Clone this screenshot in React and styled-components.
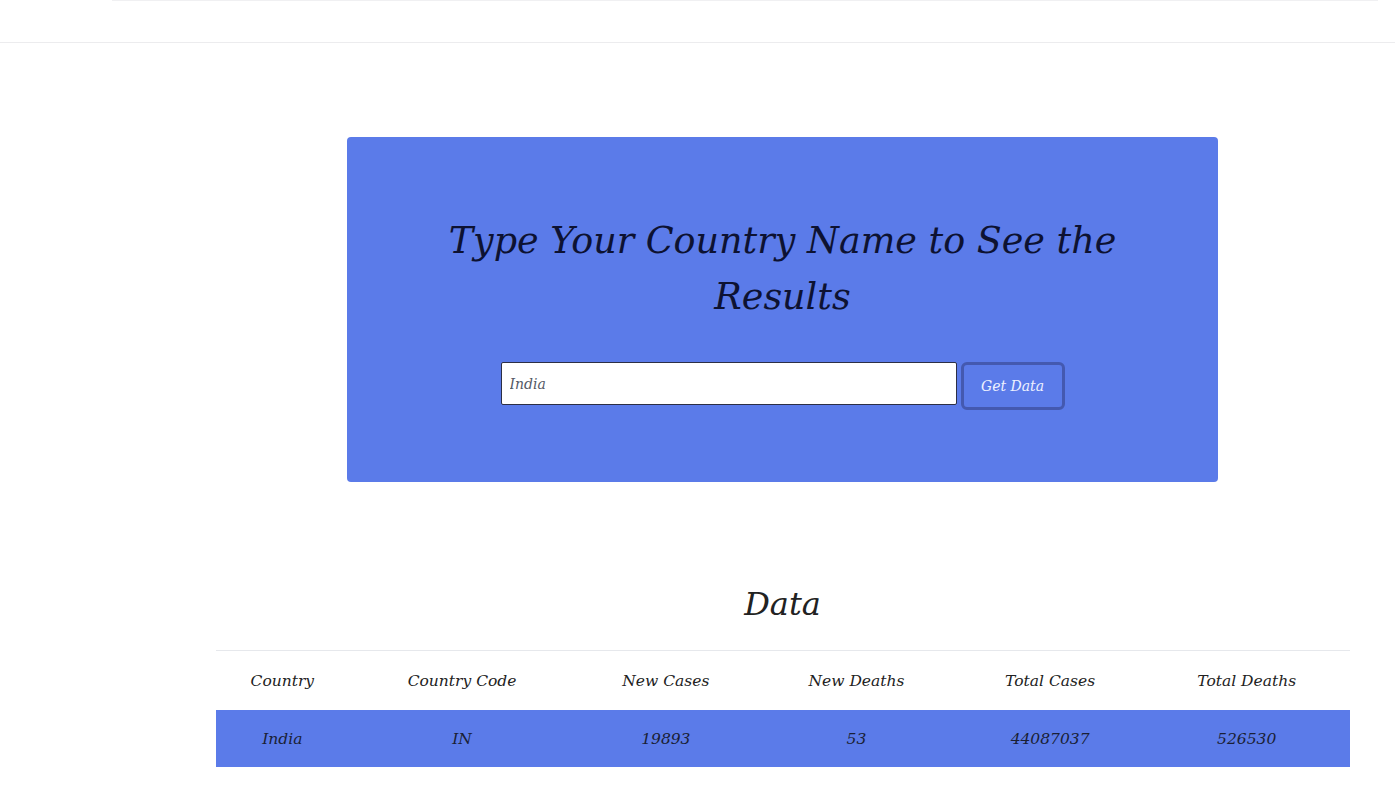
import React from "react";
import styled, { createGlobalStyle } from "styled-components";

const GlobalStyle = createGlobalStyle`
  html, body {
    margin: 0;
    padding: 0;
    background: #ffffff;
  }
  body {
    font-family: "DejaVu Serif", "Liberation Serif", serif;
    font-style: italic;
    color: #1a1f36;
  }
`;

const Nav = styled.div`
  height: 42px;
  border-bottom: 1px solid #ececee;
  display: flex;
  justify-content: center;
`;

const NavLine = styled.div`
  width: 1266px;
  margin-left: 95px;
  height: 1px;
  background: #f0f0f2;
`;

const Main = styled.div`
  padding-left: 170px;
  display: flex;
  flex-direction: column;
  align-items: center;
`;

const SearchCard = styled.div`
  margin-top: 94px;
  width: 871px;
  height: 345px;
  box-sizing: border-box;
  background: #5b7be9;
  border-radius: 4px;
  padding-top: 76px;
  display: flex;
  flex-direction: column;
  align-items: center;
`;

const Title = styled.h1`
  margin: 0;
  width: 700px;
  text-align: center;
  font-weight: 400;
  font-size: 36.5px;
  line-height: 56px;
  color: #0d1232;
`;

const Form = styled.div`
  margin-top: 37px;
  display: flex;
  align-items: flex-start;
  gap: 4px;
`;

const Input = styled.input`
  width: 456px;
  height: 43px;
  box-sizing: border-box;
  border: 1px solid #2c2f45;
  border-radius: 2px;
  padding: 0 8px;
  font-family: inherit;
  font-style: italic;
  font-size: 14px;
  color: #555a66;
  background: #ffffff;
  outline: none;
`;

const Button = styled.button`
  width: 104px;
  height: 48px;
  box-sizing: border-box;
  border: 3px solid #4459b0;
  border-radius: 6px;
  background: #5b7be9;
  color: #eef1ff;
  font-family: inherit;
  font-style: italic;
  font-size: 14px;
`;

const DataTitle = styled.h2`
  margin: 102px 0 0;
  font-weight: 400;
  font-size: 32px;
  line-height: 40px;
  color: #222;
`;

const Table = styled.table`
  margin-top: 26px;
  width: 1134px;
  border-collapse: collapse;
  border-top: 1px solid #e6e8ec;
  font-size: 15.5px;
`;

const Th = styled.th`
  height: 57px;
  font-weight: 400;
  color: #222;
  text-align: center;
`;

const Row = styled.tr`
  background: #5b7be9;
`;

const Td = styled.td`
  height: 55px;
  text-align: center;
  color: #1a1f36;
`;

const columns = ["Country", "Country Code", "New Cases", "New Deaths", "Total Cases", "Total Deaths"];
const values = ["India", "IN", "19893", "53", "44087037", "526530"];

export default function App() {
  return (
    <>
      <GlobalStyle />
      <Nav>
        <NavLine />
      </Nav>
      <Main>
        <SearchCard>
          <Title>Type Your Country Name to See the Results</Title>
          <Form>
            <Input defaultValue="India" />
            <Button>Get Data</Button>
          </Form>
        </SearchCard>
        <DataTitle>Data</DataTitle>
        <Table>
          <thead>
            <tr>
              {columns.map((c) => (
                <Th key={c}>{c}</Th>
              ))}
            </tr>
          </thead>
          <tbody>
            <Row>
              {values.map((v, i) => (
                <Td key={i}>{v}</Td>
              ))}
            </Row>
          </tbody>
        </Table>
      </Main>
    </>
  );
}
